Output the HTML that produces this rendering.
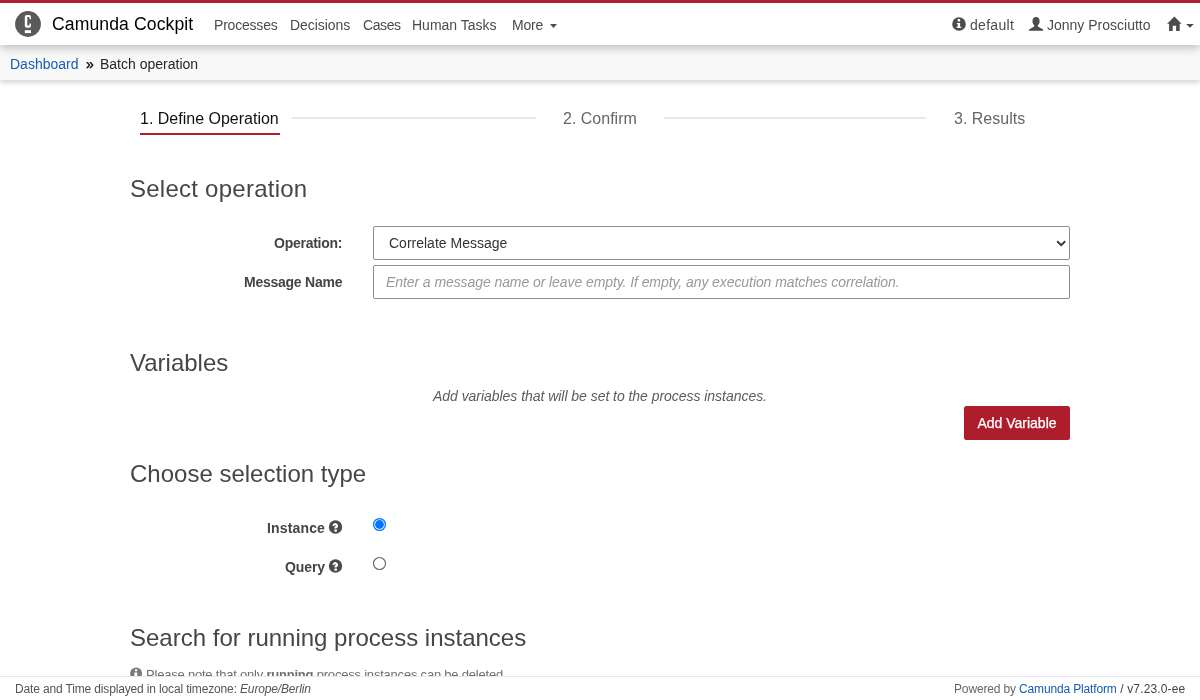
<!DOCTYPE html>
<html><head><meta charset="utf-8">
<style>
*{box-sizing:border-box;margin:0;padding:0}
html,body{width:1200px;height:700px;overflow:hidden;background:#fff}
body{font-family:"Liberation Sans",sans-serif;font-size:14px;color:#333;position:relative}
.abs{position:absolute;white-space:nowrap;line-height:1;will-change:transform}
svg{position:absolute;overflow:visible}
#topbar{position:absolute;left:0;top:0;width:1200px;height:3px;background:#ae1e2b;z-index:4}
#header{position:absolute;left:0;top:3px;width:1200px;height:42px;background:#fff;box-shadow:0 2px 10px rgba(0,0,0,.28);z-index:3}
#crumbs{position:absolute;left:0;top:45px;width:1200px;height:35px;background:#f8f8f8;box-shadow:0 2px 6px rgba(0,0,0,.2);z-index:2}
.brand{font-size:17.6px;color:#000;left:51.5px;top:12.5px;letter-spacing:0.1px}
.nav{font-size:14px;color:#4b4b4b;top:15px;letter-spacing:-0.2px}
h3{will-change:transform;position:absolute;font-weight:normal;font-size:24px;color:#464646;white-space:nowrap;left:130px;line-height:1}
.lbl{will-change:transform;position:absolute;font-weight:bold;font-size:14px;color:#444;white-space:nowrap;text-align:right;right:858px;line-height:1;letter-spacing:-0.25px}
.field{position:absolute;left:373px;width:697px;height:34px;border:1px solid #8f8f8f;border-radius:2px;background:#fff}
#footer{position:absolute;left:0;top:676px;width:1200px;height:24px;background:#fff;border-top:1px solid #e9e9e9;z-index:5}
</style></head><body>
<div id="topbar"></div>
<div id="header">
  <svg width="1200" height="45" style="left:0;top:-3px">
    <circle cx="28" cy="24" r="12.9" fill="#5a5a5a"/>
    <path fill="#fff" fill-rule="evenodd" d="M26.8 15h2.2a2 2 0 0 1 2 2v2.3h-1.5v-2.2h-2.2v8.5h2.2v-2.1h1.5v2.2a2 2 0 0 1-2 2h-2.2a2 2 0 0 1-2-2v-8.7a2 2 0 0 1 2-2z"/>
    <rect x="24.8" y="30.2" width="6.2" height="2.9" fill="#fff"/>
    <path fill="#4b4b4b" d="M550 24h7l-3.5 4z"/>
    <circle cx="959" cy="24" r="6.8" fill="#4b4b4b"/>
    <path fill="#fff" d="M957.7 19h2.4v2.6h-2.4z M956.8 22.9h3.3v3.9h1.1v1.2h-4.6v-1.2h1.1v-2.7h-0.9z"/>
    <path fill="#4b4b4b" d="M1036.1 16.9c2.1 0 3.5 1.7 3.5 3.9v.6c0 1.6-.7 2.9-1.7 3.6v1.4l5.2 3.1v1.3h-14.1v-1.3l5.2-3.1v-1.4c-1-.7-1.7-2-1.7-3.6v-.6c0-2.2 1.4-3.9 3.5-3.9z"/>
    <path fill="#4b4b4b" d="M1174.4 16.5l7.1 7.2h-1.8v7.2h-3.6v-5.2h-3.4v5.2h-3.6v-7.2h-2z"/>
    <path fill="#4b4b4b" d="M1186.2 24h7.6l-3.8 3.8z"/>
  </svg>
  <div class="abs brand">Camunda Cockpit</div>
  <div class="abs nav" style="left:214px">Processes</div>
  <div class="abs nav" style="left:290px;letter-spacing:-0.05px">Decisions</div>
  <div class="abs nav" style="left:363px;letter-spacing:-0.4px">Cases</div>
  <div class="abs nav" style="left:411.5px;letter-spacing:0px">Human Tasks</div>
  <div class="abs nav" style="left:512px">More</div>
  <div class="abs nav" style="left:970px;letter-spacing:0.3px">default</div>
  <div class="abs nav" style="left:1046.5px;letter-spacing:0px">Jonny Prosciutto</div>
</div>
<div id="crumbs">
  <div class="abs" style="left:10px;top:12px;font-size:14px;color:#155cb5">Dashboard</div>
  <div class="abs" style="left:85.7px;top:12px;font-size:14px;color:#000;-webkit-text-stroke:0.3px #000">»</div>
  <div class="abs" style="left:100px;top:12px;font-size:14px;color:#262626">Batch operation</div>
</div>

<div class="abs" style="left:140px;top:111px;font-size:16px;color:#111">1. Define Operation</div>
<div class="abs" style="left:140px;top:133px;width:140px;height:2px;background:#ae1e2b"></div>
<div class="abs" style="left:292px;top:117px;width:244px;height:2px;background:#e8e8e8"></div>
<div class="abs" style="left:563px;top:111px;font-size:16px;color:#666">2. Confirm</div>
<div class="abs" style="left:664px;top:117px;width:262px;height:2px;background:#e8e8e8"></div>
<div class="abs" style="left:954px;top:111px;font-size:16px;color:#666">3. Results</div>

<h3 style="top:177px;letter-spacing:0.25px">Select operation</h3>
<div class="lbl" style="top:236px">Operation:</div>
<div class="field" style="top:226px"></div>
<div class="abs" style="left:389px;top:236px;color:#333">Correlate Message</div>
<svg width="20" height="20" style="left:1050px;top:235px"><path d="M7.2 6.2l4 3.9 4-3.9" fill="none" stroke="#3a3a3a" stroke-width="2"/></svg>
<div class="lbl" style="top:275px">Message Name</div>
<div class="field" style="top:265px"></div>
<div class="abs" style="left:386px;top:275px;font-style:italic;color:#999;letter-spacing:-0.08px">Enter a message name or leave empty. If empty, any execution matches correlation.</div>

<h3 style="top:351px">Variables</h3>
<div class="abs" style="left:433px;top:389px;font-style:italic;color:#5c5c5c;letter-spacing:-0.04px">Add variables that will be set to the process instances.</div>
<div class="abs" style="left:964px;top:406px;width:106px;height:34px;background:#ae1d2b;border-radius:2.5px;color:#fff;text-align:center;line-height:34px;-webkit-text-stroke:0.25px #fff">Add Variable</div>

<h3 style="top:462px">Choose selection type</h3>
<div class="lbl" style="top:521px;right:875px;letter-spacing:0.15px">Instance</div>
<svg width="1200" height="700" style="left:0;top:0"><circle cx="335.5" cy="527" r="6.7" fill="#4b4b4b"/><path d="M333.6 525.9A1.7 1.7 0 1 1 336.7 526.8L335.6 527.5V528.5" fill="none" stroke="#fff" stroke-width="2.2"/><rect x="334.4" y="529.5" width="2.5" height="2.2" fill="#fff"/></svg>
<div class="lbl" style="top:560px;right:875px;letter-spacing:-0.1px">Query</div>
<svg width="1200" height="700" style="left:0;top:0"><circle cx="335.5" cy="566" r="6.7" fill="#4b4b4b"/><path d="M333.6 564.9A1.7 1.7 0 1 1 336.7 565.8L335.6 566.5V567.5" fill="none" stroke="#fff" stroke-width="2.2"/><rect x="334.4" y="568.5" width="2.5" height="2.2" fill="#fff"/></svg>
<svg width="1200" height="700" style="left:0;top:0"><circle cx="379.5" cy="524.5" r="5.9" fill="#fff" stroke="#0075ff" stroke-width="1.3"/><circle cx="379.5" cy="524.5" r="4.4" fill="#0075ff"/><circle cx="379.5" cy="563.5" r="6" fill="#fff" stroke="#666" stroke-width="1.15"/></svg>

<h3 style="top:626px">Search for running process instances</h3>
<svg width="1200" height="700" style="left:0;top:0"><circle cx="136.1" cy="673.6" r="6" fill="#7a7a7a"/><path fill="#fff" d="M135 669.3h2.2v2h-2.2z M134.4 672.4h2.8v4h-2.8z"/></svg>
<div class="abs" style="left:145.5px;top:668px;color:#6e6e6e;font-size:13px;letter-spacing:-0.21px">Please note that only <b>running</b> process instances can be deleted</div>

<div id="footer">
  <div class="abs" style="left:15px;top:6px;font-size:12px;color:#555;letter-spacing:-0.15px">Date and Time displayed in local timezone: <i>Europe/Berlin</i></div>
  <div class="abs" style="right:15px;top:6px;font-size:12px;color:#666;letter-spacing:-0.15px">Powered by <span style="color:#155cb5">Camunda Platform</span><span style="color:#444;letter-spacing:0.15px"> / v7.23.0-ee</span></div>
</div>
</body></html>
